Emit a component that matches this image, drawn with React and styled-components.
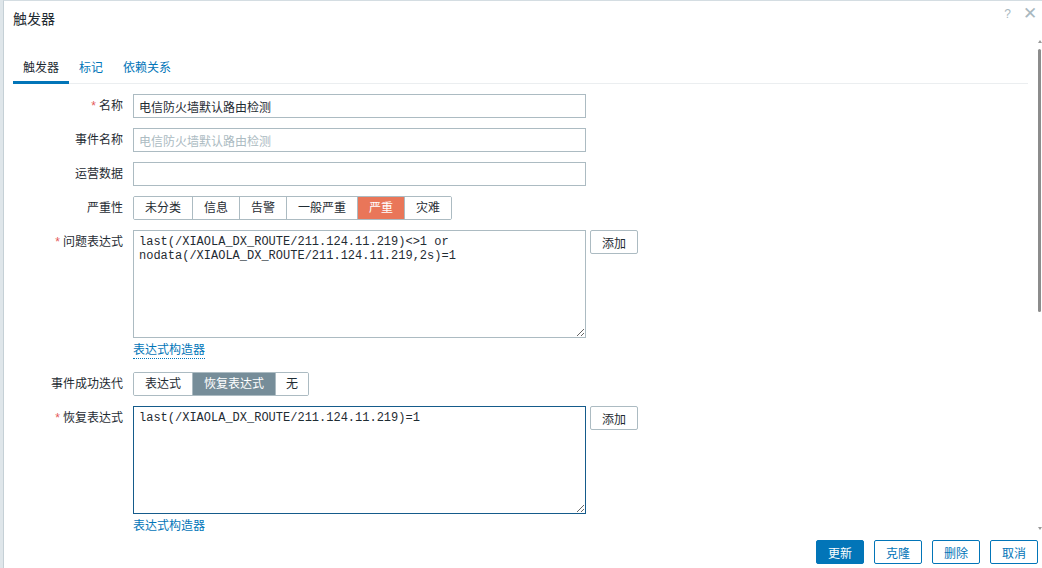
import React, { useState } from "react";
import styled, { createGlobalStyle } from "styled-components";

const GlobalStyle = createGlobalStyle`
  html, body {
    margin: 0;
    padding: 0;
    background: #dfe6ea;
    font-family: "Liberation Sans", "Noto Sans CJK SC", sans-serif;
    font-size: 12px;
    color: #1f2c33;
    overflow: hidden;
  }
`;

const Dialog = styled.div`
  margin-left: 3px;
  height: 568px;
  background: #fff;
  border-left: 1px solid #c5d0d6;
  border-top: 1px solid #d4dde2;
  box-sizing: border-box;
  display: flex;
  flex-direction: column;
`;

const Header = styled.div`
  height: 37px;
  flex-shrink: 0;
  display: flex;
  align-items: center;
  padding: 0 5px 0 9px;
`;

const Title = styled.h4`
  margin: 0;
  flex: 1;
  font-size: 14px;
  font-weight: normal;
  color: #1f2c33;
  padding-bottom: 3px;
`;

const HeaderIcon = styled.span`
  color: #a9b8bf;
  font-size: ${({ big }) => (big ? "17px" : "12px")};
  margin-left: ${({ big }) => (big ? "12px" : "0")};
  line-height: 1;
  padding-bottom: 12px;
`;

const Body = styled.div`
  position: relative;
  flex: 1;
  min-height: 0;
  padding: 0 14px 0 9px;
`;

const TabList = styled.div`
  display: flex;
  border-bottom: 1px solid #ebeef0;
  margin-top: 15px;
`;

const Tab = styled.div`
  padding: 5px 10px 6px;
  color: ${({ active }) => (active ? "#1f2c33" : "#0275b8")};
  border-bottom: 3px solid ${({ active }) => (active ? "#0275b8" : "transparent")};
  margin-bottom: -1px;
  cursor: pointer;
`;

const Form = styled.div`
  padding-top: 10px;
`;

const Row = styled.div`
  display: grid;
  grid-template-columns: 110px auto;
  column-gap: 10px;
  margin-bottom: ${({ tight }) => (tight ? "0" : "10px")};
`;

const Label = styled.div`
  text-align: right;
  line-height: 24px;
  white-space: nowrap;
`;

const Star = styled.span`
  color: #e45959;
  margin-right: 3px;
`;

const Field = styled.div`
  display: flex;
  align-items: flex-start;
  gap: 4px;
`;

const Input = styled.input`
  width: 453px;
  height: 24px;
  box-sizing: border-box;
  border: 1px solid #acbbc2;
  padding: 0 5px;
  font: inherit;
  color: ${({ readOnly }) => (readOnly ? "#acbbc2" : "#1f2c33")};
  outline: none;
`;

const TextArea = styled.textarea`
  width: 453px;
  height: 108px;
  box-sizing: border-box;
  border: 1px solid ${({ focused }) => (focused ? "#155b8b" : "#acbbc2")};
  padding: 4px 5px;
  font-family: "Liberation Mono", monospace;
  font-size: 12px;
  line-height: 14px;
  color: #1f2c33;
  outline: none;
  resize: both;
  display: block;
`;

const AddButton = styled.button`
  width: 48px;
  height: 24px;
  background: #fff;
  border: 1px solid #acbbc2;
  border-radius: 2px;
  font: inherit;
  color: #1f2c33;
  cursor: pointer;
`;

const Segment = styled.div`
  display: inline-flex;
  border: 1px solid #acbbc2;
  border-radius: 2px;
  overflow: hidden;
  height: 24px;
  box-sizing: border-box;
`;

const SegButton = styled.div`
  padding: 0 ${({ pad }) => pad}px;
  line-height: 22px;
  border-left: 1px solid #acbbc2;
  background: ${({ color }) => color || "#fff"};
  color: ${({ color }) => (color ? "#fff" : "#1f2c33")};
  cursor: pointer;
  &:first-child {
    border-left: none;
  }
`;

const Link = styled.a`
  display: inline-block;
  color: #0275b8;
  text-decoration: none;
  line-height: 16px;
  margin-top: 4px;
  margin-bottom: ${({ dotted }) => (dotted ? "13px" : "0")};
  border-bottom: 1px dotted ${({ dotted }) => (dotted ? "#0275b8" : "transparent")};
  cursor: pointer;
`;

const Scrollbar = styled.div`
  position: absolute;
  right: 0;
  top: 2px;
  bottom: 2px;
  width: 5px;
  display: flex;
  flex-direction: column;
  align-items: center;
`;

const Arrow = styled.div`
  width: 0;
  height: 0;
  border-left: 2px solid transparent;
  border-right: 2px solid transparent;
  ${({ down }) => (down ? "border-top: 3px solid #9a9a9a;" : "border-bottom: 3px solid #9a9a9a;")}
  margin-top: ${({ down }) => (down ? "auto" : "0")};
`;

const Thumb = styled.div`
  width: 3px;
  height: 263px;
  margin-top: 6px;
  background: #8c8c8c;
  border-radius: 2px;
`;

const Footer = styled.div`
  flex-shrink: 0;
  display: flex;
  justify-content: flex-end;
  gap: 10px;
  padding: 8px 4px 4px;
`;

const FooterButton = styled.button`
  width: 48px;
  height: 24px;
  border-radius: 2px;
  border: 1px solid #0275b8;
  background: ${({ primary }) => (primary ? "#0275b8" : "#fff")};
  color: ${({ primary }) => (primary ? "#fff" : "#0275b8")};
  font: inherit;
  cursor: pointer;
`;

const severities = [
  { name: "未分类", pad: 11 },
  { name: "信息", pad: 11 },
  { name: "告警", pad: 11 },
  { name: "一般严重", pad: 11 },
  { name: "严重", pad: 11, color: "#e97659" },
  { name: "灾难", pad: 11 },
];

const okModes = [
  { name: "表达式", pad: 11 },
  { name: "恢复表达式", pad: 11, color: "#768d99" },
  { name: "无", pad: 10 },
];

export default function App() {
  const [tab, setTab] = useState("trigger");

  return (
    <>
      <GlobalStyle />
      <Dialog>
        <Header>
          <Title>触发器</Title>
          <HeaderIcon>?</HeaderIcon>
          <HeaderIcon big>✕</HeaderIcon>
        </Header>
        <Body>
          <TabList>
            <Tab active={tab === "trigger"} onClick={() => setTab("trigger")}>触发器</Tab>
            <Tab active={tab === "tags"} onClick={() => setTab("tags")}>标记</Tab>
            <Tab active={tab === "deps"} onClick={() => setTab("deps")}>依赖关系</Tab>
          </TabList>
          <Form>
            <Row>
              <Label><Star>*</Star>名称</Label>
              <Field><Input defaultValue="电信防火墙默认路由检测" /></Field>
            </Row>
            <Row>
              <Label>事件名称</Label>
              <Field><Input readOnly defaultValue="电信防火墙默认路由检测" /></Field>
            </Row>
            <Row>
              <Label>运营数据</Label>
              <Field><Input defaultValue="" /></Field>
            </Row>
            <Row>
              <Label>严重性</Label>
              <Field>
                <Segment>
                  {severities.map((s) => (
                    <SegButton key={s.name} pad={s.pad} color={s.color}>{s.name}</SegButton>
                  ))}
                </Segment>
              </Field>
            </Row>
            <Row tight>
              <Label><Star>*</Star>问题表达式</Label>
              <div>
                <Field>
                  <TextArea defaultValue={"last(/XIAOLA_DX_ROUTE/211.124.11.219)<>1 or\nnodata(/XIAOLA_DX_ROUTE/211.124.11.219,2s)=1"} />
                  <AddButton>添加</AddButton>
                </Field>
                <Link dotted>表达式构造器</Link>
              </div>
            </Row>
            <Row>
              <Label>事件成功迭代</Label>
              <Field>
                <Segment>
                  {okModes.map((s) => (
                    <SegButton key={s.name} pad={s.pad} color={s.color}>{s.name}</SegButton>
                  ))}
                </Segment>
              </Field>
            </Row>
            <Row tight>
              <Label><Star>*</Star>恢复表达式</Label>
              <div>
                <Field>
                  <TextArea focused defaultValue="last(/XIAOLA_DX_ROUTE/211.124.11.219)=1" />
                  <AddButton>添加</AddButton>
                </Field>
                <Link>表达式构造器</Link>
              </div>
            </Row>
          </Form>
          <Scrollbar>
            <Arrow />
            <Thumb />
            <Arrow down />
          </Scrollbar>
        </Body>
        <Footer>
          <FooterButton primary>更新</FooterButton>
          <FooterButton>克隆</FooterButton>
          <FooterButton>删除</FooterButton>
          <FooterButton>取消</FooterButton>
        </Footer>
      </Dialog>
    </>
  );
}
